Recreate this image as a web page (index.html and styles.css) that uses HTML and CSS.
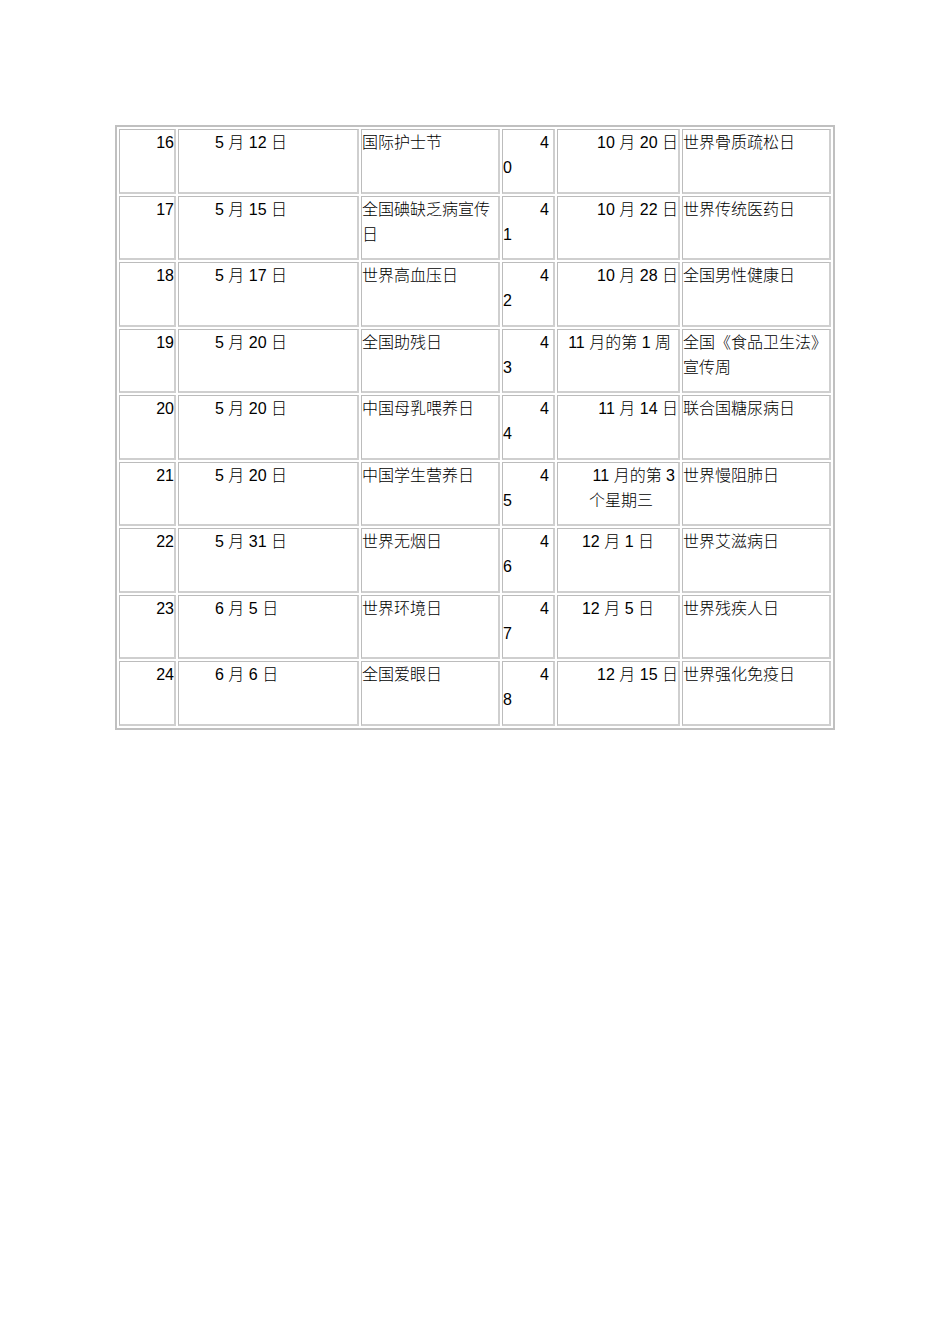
FILE: index.html
```html
<!DOCTYPE html>
<html lang="zh">
<head>
<meta charset="utf-8">
<link rel="stylesheet" href="styles.css">
</head>
<body>
<div class="page">
<table class="days">
<tr><td class="n">16</td><td class="d">5 月 12 日</td><td class="t">国际护士节</td><td class="n2"><div class="hi">4</div><div class="lo">0</div></td><td class="d2">10 月 20 日</td><td class="t2">世界骨质疏松日</td></tr>
<tr><td class="n">17</td><td class="d">5 月 15 日</td><td class="t">全国碘缺乏病宣传日</td><td class="n2"><div class="hi">4</div><div class="lo">1</div></td><td class="d2">10 月 22 日</td><td class="t2">世界传统医药日</td></tr>
<tr><td class="n">18</td><td class="d">5 月 17 日</td><td class="t">世界高血压日</td><td class="n2"><div class="hi">4</div><div class="lo">2</div></td><td class="d2">10 月 28 日</td><td class="t2">全国男性健康日</td></tr>
<tr><td class="n">19</td><td class="d">5 月 20 日</td><td class="t">全国助残日</td><td class="n2"><div class="hi">4</div><div class="lo">3</div></td><td class="d2 pr7">11 月的第 1 周</td><td class="t2">全国《食品卫生法》宣传周</td></tr>
<tr><td class="n">20</td><td class="d">5 月 20 日</td><td class="t">中国母乳喂养日</td><td class="n2"><div class="hi">4</div><div class="lo">4</div></td><td class="d2">11 月 14 日</td><td class="t2">联合国糖尿病日</td></tr>
<tr><td class="n">21</td><td class="d">5 月 20 日</td><td class="t">中国学生营养日</td><td class="n2"><div class="hi">4</div><div class="lo">5</div></td><td class="d2"><div class="pr3">11 月的第 3</div><div class="pr25">个星期三</div></td><td class="t2">世界慢阻肺日</td></tr>
<tr><td class="n">22</td><td class="d">5 月 31 日</td><td class="t">世界无烟日</td><td class="n2"><div class="hi">4</div><div class="lo">6</div></td><td class="d2 pr24">12 月 1 日</td><td class="t2">世界艾滋病日</td></tr>
<tr><td class="n">23</td><td class="d">6 月 5 日</td><td class="t">世界环境日</td><td class="n2"><div class="hi">4</div><div class="lo">7</div></td><td class="d2 pr24">12 月 5 日</td><td class="t2">世界残疾人日</td></tr>
<tr><td class="n">24</td><td class="d">6 月 6 日</td><td class="t">全国爱眼日</td><td class="n2"><div class="hi">4</div><div class="lo">8</div></td><td class="d2">12 月 15 日</td><td class="t2">世界强化免疫日</td></tr>
</table>
</div>
</body>
</html>
```

FILE: styles.css
```css
html, body {
  margin: 0;
  padding: 0;
  background: #ffffff;
}

.page {
  padding: 125px 0 0 115px;
  font-family: "Liberation Sans", "Noto Sans CJK SC", sans-serif;
  font-size: 16px;
  font-weight: 300;
  line-height: 25px;
  color: #000000;
}

.days {
  border-collapse: separate;
  border-spacing: 2px;
  border: 2px solid #c0c0c0;
  table-layout: fixed;
  width: 720px;
}

.days td {
  box-sizing: border-box;
  height: 64.5px;
  border: 1px solid #bcbcbc;
  border-right-width: 2px;
  border-bottom-width: 2px;
  border-right-color: #cfcfcf;
  border-bottom-color: #cfcfcf;
  vertical-align: top;
  padding: 0;
}

.days td.n {
  width: 57px;
  text-align: right;
}

.days td.d {
  width: 181px;
  padding-left: 36px;
}

.days td.t {
  width: 139px;
}

.days td.n2 {
  width: 53px;
}

.days td.n2 .hi {
  text-align: right;
  padding-right: 4px;
}

.days td.n2 .lo {
  text-align: left;
}

.days td.d2 {
  width: 123px;
  text-align: right;
}

.days td.t2 {
  width: 149px;
}

.days td.pr7 {
  padding-right: 7px;
}

.days td.pr24 {
  padding-right: 24px;
}

.pr3 {
  padding-right: 3px;
}

.pr25 {
  padding-right: 25px;
}
```
